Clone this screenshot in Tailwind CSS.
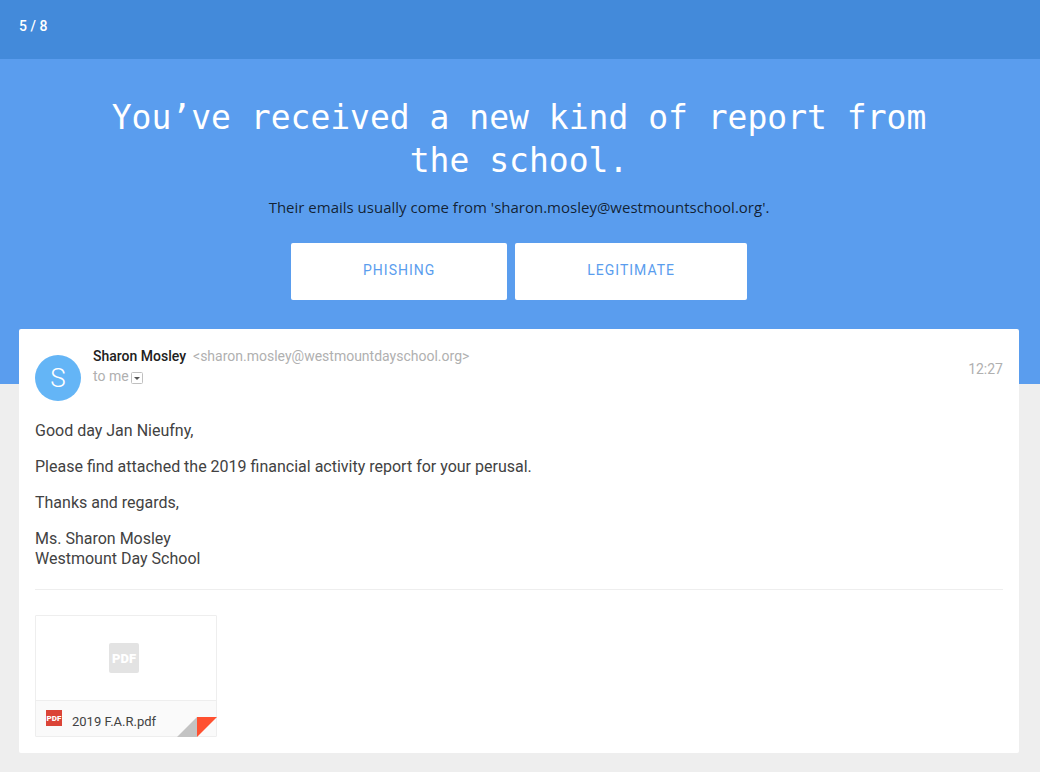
<!DOCTYPE html>
<html lang="en">
<head>
    <meta charset="UTF-8">
    <meta name="viewport" content="width=device-width, initial-scale=1.0">
    <title>Phishing Quiz</title>
    <script src="https://cdn.jsdelivr.net/npm/@tailwindcss/browser@4"></script>
</head>
<body class="min-h-screen bg-[#eeeeee] font-['Roboto',sans-serif]">
    <!-- Progress -->
    <header class="bg-[#438ada] pl-[19px] pr-[21px] pt-4 pb-[23px]">
        <div class="text-sm leading-5 font-medium text-white">5 / 8</div>
    </header>

    <!-- Question -->
    <section class="bg-[#5a9dee] pl-[19px] pr-[21px] pt-[37px] pb-[84px] text-center">
        <h1 class="mx-auto max-w-[860px] font-['DejaVu_Sans_Mono',monospace] text-[33px] leading-[43px] text-white">You’ve received a new kind of report from the school.</h1>
        <p class="mt-[13px] font-['Open_Sans',sans-serif] text-[15px] leading-6 text-black/80">Their emails usually come from 'sharon.mosley@westmountschool.org'.</p>
        <div class="mt-6 flex justify-center gap-2">
            <button class="rounded-xs bg-white px-[72px] pt-[17px] pb-5 text-sm leading-5 tracking-[1px] text-[#5a9dee] uppercase">Phishing</button>
            <button class="rounded-xs bg-white px-[72px] pt-[17px] pb-5 text-sm leading-5 tracking-[1px] text-[#5a9dee] uppercase">Legitimate</button>
        </div>
    </section>

    <!-- Email -->
    <main class="-mt-[55px] pl-[19px] pr-[21px] pb-[19px]">
        <article class="rounded-xs bg-white px-4 pt-[17px] pb-4">
            <div class="flex items-start">
                <div class="mt-[9px] flex size-[46px] shrink-0 items-center justify-center rounded-full bg-[#64b5f6] text-[26px] leading-none font-light text-white">S</div>
                <div class="ml-3 grow text-sm leading-5">
                    <div class="flex flex-wrap gap-x-[7px]">
                        <span class="font-medium text-[#212121]">Sharon Mosley</span>
                        <span class="text-[#b0b0b0]">&lt;sharon.mosley@westmountdayschool.org&gt;</span>
                    </div>
                    <div class="flex items-center gap-[2px] text-[#b0b0b0]">
                        <span>to me</span>
                        <button class="mt-1" aria-label="Show details">
                            <svg class="block size-3" viewBox="0 0 12 12">
                                <rect x="0.5" y="0.5" width="11" height="11" rx="1" fill="#fff" stroke="#c0c0c0"></rect>
                                <path d="M3 5h6L6 8z" fill="#555"></path>
                            </svg>
                        </button>
                    </div>
                </div>
                <time class="mt-[13px] text-sm leading-5 text-[#b0b0b0]">12:27</time>
            </div>

            <div class="mt-5 space-y-4 text-base leading-5 text-[#424242]">
                <p>Good day Jan Nieufny,</p>
                <p>Please find attached the 2019 financial activity report for your perusal.</p>
                <p>Thanks and regards,</p>
                <p>Ms. Sharon Mosley<br>Westmount Day School</p>
            </div>

            <hr class="mt-5 mb-[25px] border-[#eeeeee]">

            <!-- Attachment -->
            <a href="#" class="relative block w-[182px] rounded-[1px] border border-[#eeeeee]">
                <div class="flex h-[84px] items-center justify-center pr-1">
                    <svg class="size-[30px]" viewBox="0 0 30 30">
                        <rect width="30" height="30" rx="2" fill="#e3e3e3"></rect>
                        <text x="15" y="20" text-anchor="middle" font-family="Roboto" font-size="13" font-weight="900" fill="#fff">PDF</text>
                    </svg>
                </div>
                <div class="flex h-9 items-start gap-[10px] border-t border-[#eeeeee] bg-[#fafafa] pt-[9px] pl-[10px]">
                    <svg class="size-4" viewBox="0 0 16 16">
                        <rect width="16" height="16" fill="#db4437"></rect>
                        <text x="8" y="11" text-anchor="middle" font-family="Roboto" font-size="8" font-weight="900" fill="#fff">PDF</text>
                    </svg>
                    <span class="mt-1 text-[13px] leading-4 text-[#424242]">2019 F.A.R.pdf</span>
                </div>
                <svg class="absolute -right-px -bottom-px h-5 w-10" viewBox="0 0 40 20">
                    <path d="M20 0v20H0z" fill="#c3c3c3"></path>
                    <path d="M20 0h20L20 20z" fill="#ff5030"></path>
                </svg>
            </a>
        </article>
    </main>
</body>
</html>
